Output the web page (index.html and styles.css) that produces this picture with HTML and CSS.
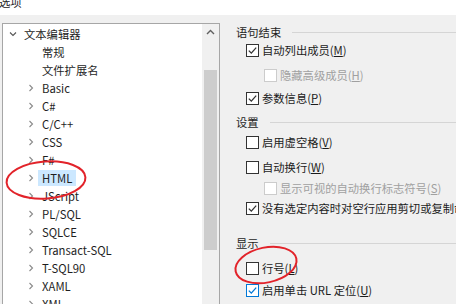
FILE: index.html
```html
<!DOCTYPE html>
<html lang="zh-CN">
<head>
<meta charset="utf-8">
<title>选项</title>
<link rel="stylesheet" href="styles.css">
</head>
<body>
<div class="titlebar"><div class="title">选项</div></div>
<div class="main">
  <div class="tree">
    <div class="tree-list">
      <div class="row lvl0"><svg class="chev" viewBox="0 0 10 18"><path d="M2 7.5 L5 10.5 L8 7.5"/></svg><span class="label">文本编辑器</span></div>
      <div class="row lvl1"><span class="chev"></span><span class="label">常规</span></div>
      <div class="row lvl1"><span class="chev"></span><span class="label">文件扩展名</span></div>
      <div class="row lvl1"><svg class="chev" viewBox="0 0 10 18"><path d="M3.5 6 L6.5 9 L3.5 12"/></svg><span class="label">Basic</span></div>
      <div class="row lvl1"><svg class="chev" viewBox="0 0 10 18"><path d="M3.5 6 L6.5 9 L3.5 12"/></svg><span class="label">C#</span></div>
      <div class="row lvl1"><svg class="chev" viewBox="0 0 10 18"><path d="M3.5 6 L6.5 9 L3.5 12"/></svg><span class="label">C/C++</span></div>
      <div class="row lvl1"><svg class="chev" viewBox="0 0 10 18"><path d="M3.5 6 L6.5 9 L3.5 12"/></svg><span class="label">CSS</span></div>
      <div class="row lvl1"><svg class="chev" viewBox="0 0 10 18"><path d="M3.5 6 L6.5 9 L3.5 12"/></svg><span class="label">F#</span></div>
      <div class="row lvl1"><svg class="chev" viewBox="0 0 10 18"><path d="M3.5 6 L6.5 9 L3.5 12"/></svg><span class="label selected">HTML</span></div>
      <div class="row lvl1"><svg class="chev" viewBox="0 0 10 18"><path d="M3.5 6 L6.5 9 L3.5 12"/></svg><span class="label">JScript</span></div>
      <div class="row lvl1"><svg class="chev" viewBox="0 0 10 18"><path d="M3.5 6 L6.5 9 L3.5 12"/></svg><span class="label">PL/SQL</span></div>
      <div class="row lvl1"><svg class="chev" viewBox="0 0 10 18"><path d="M3.5 6 L6.5 9 L3.5 12"/></svg><span class="label">SQLCE</span></div>
      <div class="row lvl1"><svg class="chev" viewBox="0 0 10 18"><path d="M3.5 6 L6.5 9 L3.5 12"/></svg><span class="label">Transact-SQL</span></div>
      <div class="row lvl1"><svg class="chev" viewBox="0 0 10 18"><path d="M3.5 6 L6.5 9 L3.5 12"/></svg><span class="label">T-SQL90</span></div>
      <div class="row lvl1"><svg class="chev" viewBox="0 0 10 18"><path d="M3.5 6 L6.5 9 L3.5 12"/></svg><span class="label">XAML</span></div>
      <div class="row lvl1"><svg class="chev" viewBox="0 0 10 18"><path d="M3.5 6 L6.5 9 L3.5 12"/></svg><span class="label">XML</span></div>
    </div>
    <div class="vscroll">
      <div class="sb-arrow"><svg viewBox="0 0 17 17"><path d="M5 10 L8.5 6.5 L12 10"/></svg></div>
      <div class="sb-thumb"></div>
    </div>
  </div>

  <div class="options">
    <div class="group-head"><span>语句结束</span><span class="rule"></span></div>
    <div class="opt"><span class="cb checked"><svg viewBox="0 0 11 11"><path d="M1.8 5.6 L4.3 8.1 L9.2 2.6"/></svg></span><span class="txt">自动列出成员(<u>M</u>)</span></div>
    <div class="opt sub disabled m5"><span class="cb"></span><span class="txt">隐藏高级成员(<u>H</u>)</span></div>
    <div class="opt m3"><span class="cb checked"><svg viewBox="0 0 11 11"><path d="M1.8 5.6 L4.3 8.1 L9.2 2.6"/></svg></span><span class="txt">参数信息(<u>P</u>)</span></div>

    <div class="group-head m6"><span>设置</span><span class="rule"></span></div>
    <div class="opt m2"><span class="cb"></span><span class="txt">启用虚空格(<u>V</u>)</span></div>
    <div class="opt m5"><span class="cb"></span><span class="txt">自动换行(<u>W</u>)</span></div>
    <div class="opt sub disabled m1"><span class="cb"></span><span class="txt">显示可视的自动换行标志符号(<u>S</u>)</span></div>
    <div class="opt"><span class="cb checked"><svg viewBox="0 0 11 11"><path d="M1.8 5.6 L4.3 8.1 L9.2 2.6"/></svg></span><span class="txt">没有选定内容时对空行应用剪切或复制命令</span></div>

    <div class="group-head m17"><span>显示</span><span class="rule"></span></div>
    <div class="opt m7"><span class="cb"></span><span class="txt">行号(<u>L</u>)</span></div>
    <div class="opt m2"><span class="cb checked focus"><svg viewBox="0 0 11 11"><path d="M1.8 5.6 L4.3 8.1 L9.2 2.6"/></svg></span><span class="txt">启用单击 URL 定位(<u>U</u>)</span></div>
  </div>
</div>

<svg class="marks" viewBox="0 0 456 304" width="456" height="304">
  <ellipse cx="46" cy="180" rx="39.5" ry="18.5" transform="rotate(-4 46 180)"/>
  <ellipse cx="266" cy="265" rx="31" ry="17.5" transform="rotate(-12 266 265)"/>
</svg>
</body>
</html>
```

FILE: styles.css
```css
html, body {
  margin: 0;
  padding: 0;
}
body {
  width: 456px;
  height: 304px;
  overflow: hidden;
  position: relative;
  background: #f0f0f0;
  font-family: "Noto Sans CJK SC", "Noto Sans", sans-serif;
  font-size: 11.3px;
  color: #1b1b1b;
}
.titlebar {
  height: 15px;
  background: #ffffff;
  overflow: hidden;
}
.title {
  margin-top: -5px;
  margin-left: -1px;
  line-height: 14px;
  color: #222;
}
.main {
  display: flex;
  padding-top: 8px;
  height: 281px;
}
.tree {
  margin-left: 2px;
  width: 216px;
  height: 300px;
  flex: none;
  border: 1px solid #a6a6a6;
  background: #ffffff;
  display: flex;
}
.tree-list {
  flex: 1;
  padding-top: 1px;
  overflow: hidden;
}
.row {
  display: flex;
  align-items: center;
  height: 18px;
  white-space: nowrap;
}
.row.lvl0 { padding-left: 5px; }
.row.lvl1 { padding-left: 23px; }
.chev {
  width: 10px;
  height: 18px;
  flex: none;
  margin-right: 2px;
}
.chev path {
  fill: none;
  stroke: #8a8a8a;
  stroke-width: 1.1;
}
.row.lvl0 .chev path { stroke: #555; }
.label {
  padding: 0 4px;
  line-height: 16px;
  color: #1e1e1e;
}
.label.selected {
  background: #cce8ff;
}
.vscroll {
  width: 17px;
  flex: none;
  background: #f0f0f0;
}
.sb-arrow {
  height: 17px;
}
.sb-arrow svg {
  width: 17px;
  height: 17px;
  display: block;
}
.sb-arrow path {
  fill: none;
  stroke: #606060;
  stroke-width: 1.4;
}
.sb-thumb {
  margin: 29px 2px 0 2px;
  height: 180px;
  background: #cdcdcd;
}
.options {
  flex: 1;
  min-width: 0;
  padding-left: 16px;
  padding-top: 1px;
  white-space: nowrap;
  overflow: hidden;
}
.group-head {
  display: flex;
  align-items: center;
  height: 16px;
  line-height: 16px;
  color: #1e1e1e;
}
.group-head .rule {
  flex: 1;
  height: 1px;
  margin-left: 11px;
  background: #d5d5d5;
}
.opt {
  display: flex;
  align-items: center;
  height: 20px;
  padding-left: 10px;
}
.opt.sub { padding-left: 28px; }
.m1 { margin-top: 1px; }
.m2 { margin-top: 2px; }
.m3 { margin-top: 3px; }
.m5 { margin-top: 5px; }
.m6 { margin-top: 6px; }
.m7 { margin-top: 7px; }
.m17 { margin-top: 17px; }
.cb {
  width: 11px;
  height: 11px;
  flex: none;
  border: 1px solid #333333;
  background: #ffffff;
  margin-right: 3px;
  display: flex;
}
.cb svg {
  width: 11px;
  height: 11px;
}
.cb path {
  fill: none;
  stroke: #333;
  stroke-width: 1.3;
}
.cb.focus { border-color: #0078d7; }
.cb.focus path { stroke: #0078d7; }
.opt.disabled .cb { border-color: #cccccc; }
.opt.disabled .txt { color: #a0a0a0; }
.txt u { text-decoration: underline; }
.marks {
  position: absolute;
  left: 0;
  top: 0;
  pointer-events: none;
}
.marks ellipse {
  fill: none;
  stroke: #e2232a;
  stroke-width: 2;
}
```
